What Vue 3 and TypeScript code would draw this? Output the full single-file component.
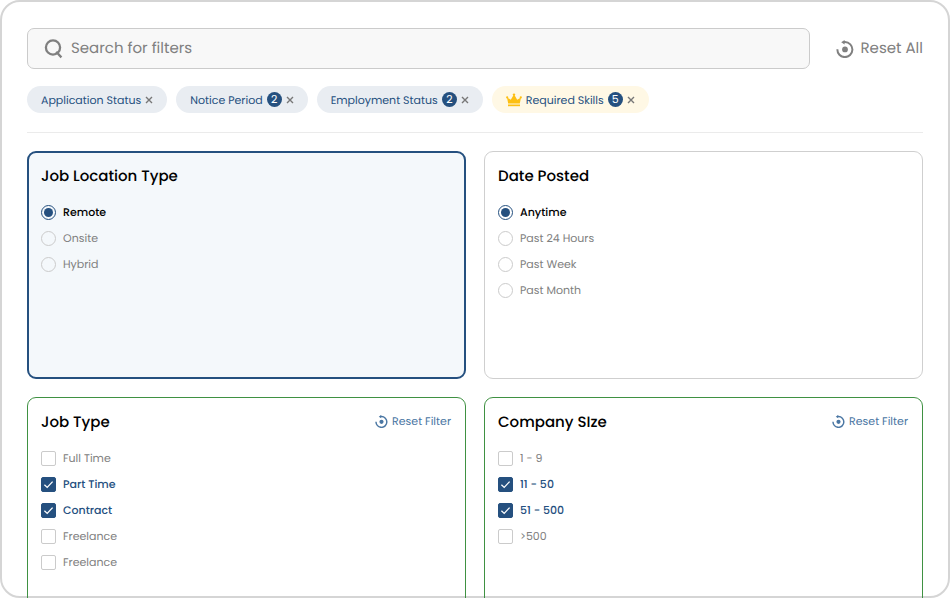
<script setup lang="ts">
import { ref, reactive } from 'vue'

interface Chip {
  label: string
  count?: number
  premium?: boolean
}

interface FilterGroup {
  id: string
  title: string
  kind: 'radio' | 'checkbox'
  tone: 'focused' | 'plain' | 'applied'
  options: string[]
  selected: number[]
}

const query = ref('')

const chips = ref<Chip[]>([
  { label: 'Application Status' },
  { label: 'Notice Period', count: 2 },
  { label: 'Employment Status', count: 2 },
  { label: 'Required Skills', count: 5, premium: true },
])

const groups = reactive<FilterGroup[]>([
  { id: 'location', title: 'Job Location Type', kind: 'radio', tone: 'focused', options: ['Remote', 'Onsite', 'Hybrid'], selected: [0] },
  { id: 'date', title: 'Date Posted', kind: 'radio', tone: 'plain', options: ['Anytime', 'Past 24 Hours', 'Past Week', 'Past Month'], selected: [0] },
  { id: 'type', title: 'Job Type', kind: 'checkbox', tone: 'applied', options: ['Full Time', 'Part Time', 'Contract', 'Freelance', 'Freelance'], selected: [1, 2] },
  { id: 'size', title: 'Company SIze', kind: 'checkbox', tone: 'applied', options: ['1 - 9', '11 - 50', '51 - 500', '>500'], selected: [1, 2] },
])

function toggle(group: FilterGroup, index: number) {
  if (group.kind === 'radio') {
    group.selected = [index]
  } else if (group.selected.includes(index)) {
    group.selected = group.selected.filter((i) => i !== index)
  } else {
    group.selected = [...group.selected, index]
  }
}

function resetGroup(group: FilterGroup) {
  group.selected = group.kind === 'radio' ? [0] : []
}

function resetAll() {
  query.value = ''
  chips.value = []
  groups.forEach(resetGroup)
}
</script>

<template>
  <main class="panel">
    <header class="toolbar">
      <label class="search">
        <svg class="search-icon" viewBox="0 0 20 20" aria-hidden="true">
          <circle cx="9" cy="8.5" r="7.1" />
          <path d="M12.2 12.8 17.4 18.4" />
        </svg>
        <input v-model="query" type="text" placeholder="Search for filters" aria-label="Search for filters" />
      </label>
      <button class="reset reset-all" type="button" @click="resetAll">
        <svg viewBox="0 0 18 18" aria-hidden="true">
          <path class="arc" d="M1.4 9.3a7.5 7.5 0 1 0 7.6-7.2H7" />
          <path class="dot" d="M8.6 0v4.6L5.2 2.3z" />
          <circle class="dot" cx="9" cy="9.4" r="2.9" />
        </svg>
        Reset All
      </button>
    </header>

    <ul class="chips">
      <li v-for="(chip, i) in chips" :key="chip.label" class="chip" :class="{ premium: chip.premium }">
        <svg v-if="chip.premium" class="crown" viewBox="0 0 16 14" aria-hidden="true">
          <path d="M2.2 10.4 1 4.4 4.8 6.8 8 1.2l3.2 5.6L15 4.4l-1.2 6z" />
          <circle cx="8" cy="1.6" r="1.2" />
          <circle cx="1.2" cy="4.4" r="1.1" />
          <circle cx="14.8" cy="4.4" r="1.1" />
          <path d="M2 11.5h12v1.7H2z" />
        </svg>
        <span>{{ chip.label }}</span>
        <span v-if="chip.count" class="count">{{ chip.count }}</span>
        <button class="remove" type="button" :aria-label="'Remove ' + chip.label" @click="chips.splice(i, 1)">
          <svg viewBox="0 0 8 8" aria-hidden="true"><path d="M1 1l6 6M7 1 1 7" /></svg>
        </button>
      </li>
    </ul>

    <section class="grid">
      <fieldset v-for="group in groups" :key="group.id" class="card" :class="group.tone" :aria-labelledby="group.id + '-title'">
        <div class="card-head">
          <h2 :id="group.id + '-title'">{{ group.title }}</h2>
          <button v-if="group.tone === 'applied'" class="reset" type="button" @click="resetGroup(group)">
            <svg viewBox="0 0 18 18" aria-hidden="true">
              <path class="arc" d="M1.4 9.3a7.5 7.5 0 1 0 7.6-7.2H7" />
              <path class="dot" d="M8.6 0v4.6L5.2 2.3z" />
              <circle class="dot" cx="9" cy="9.4" r="2.9" />
            </svg>
            Reset Filter
          </button>
        </div>
        <label v-for="(option, i) in group.options" :key="i" class="option" :class="[group.kind, { on: group.selected.includes(i) }]">
          <span class="control">
            <input :type="group.kind" :name="group.id" :checked="group.selected.includes(i)" @change="toggle(group, i)" />
            <svg v-if="group.kind === 'checkbox' && group.selected.includes(i)" viewBox="0 0 15 15" aria-hidden="true">
              <path d="M3.4 7.8 6.2 10.4 11.6 4.6" />
            </svg>
          </span>
          {{ option }}
        </label>
      </fieldset>
    </section>
  </main>
</template>

<style>
html,
body {
  background: #fff;
  overflow: hidden;
}
</style>

<style scoped>
.panel {
  box-sizing: border-box;
  height: 100vh;
  padding: 26px 25px;
  border: 2px solid #d5d5d5;
  border-radius: 20px;
  background: #fff;
  color: #000;
  font-family: Poppins, Inter, sans-serif;
  font-size: 11px;
  line-height: 16px;
  text-rendering: geometricPrecision;
}

button,
input {
  margin: 0;
  padding: 0;
  border: 0;
  background: none;
  color: inherit;
  font: inherit;
  text-rendering: inherit;
}

button {
  cursor: pointer;
}

.toolbar {
  display: flex;
  align-items: center;
  gap: 26px;
  font-size: 15px;
  color: #808080;
}

.search {
  box-sizing: border-box;
  flex: 1;
  display: flex;
  align-items: center;
  gap: 7px;
  height: 41px;
  padding: 0 16px;
  border: 1px solid #cbcbcb;
  border-radius: 7px;
  background: #f8f8f8;
}

.search input {
  flex: 1;
  min-width: 0;
  outline: 0;
  line-height: 20px;
}

.search input::placeholder {
  color: #808080;
  opacity: 1;
}

.search-icon {
  width: 20px;
  height: 20px;
  fill: none;
  stroke: #808080;
  stroke-width: 2.3;
}

.reset {
  display: flex;
  align-items: center;
  gap: 4px;
  color: #4a76a3;
  line-height: 20px;
  white-space: nowrap;
}

.reset svg {
  width: 13px;
  height: 13px;
}

.reset-all {
  gap: 6px;
  color: #808080;
}

.reset-all svg {
  width: 18px;
  height: 18px;
}

.arc {
  fill: none;
  stroke: currentColor;
  stroke-width: 2;
}

.dot {
  fill: currentColor;
}

.chips {
  display: flex;
  gap: 9px;
  margin: 17px 0 18px;
  padding: 0 0 19px;
  border-bottom: 1px solid #ebebeb;
  list-style: none;
}

.chip {
  display: flex;
  align-items: center;
  gap: 4px;
  height: 27px;
  padding: 0 14px;
  border-radius: 14px;
  background: #e9edf2;
  color: #25507f;
  white-space: nowrap;
}

.premium {
  background: #fff8e5;
}

.crown {
  width: 16px;
  height: 14px;
  fill: #fdbf12;
}

.count {
  width: 15px;
  height: 15px;
  border-radius: 50%;
  background: #25507f;
  color: #fff;
  line-height: 15px;
  text-align: center;
}

.remove {
  display: flex;
}

.remove svg {
  width: 8px;
  height: 8px;
  fill: none;
  stroke: #777;
  stroke-width: 1.4;
}

.grid {
  display: grid;
  grid-template-columns: 1fr 1fr;
  grid-auto-rows: minmax(228px, auto);
  gap: 18px;
}

.card {
  min-width: 0;
  margin: 0;
  padding: 13px 14px 13px 13px;
  border: 1px solid #cfcfcf;
  border-radius: 9px;
}

.focused {
  padding: 12px;
  border: 2px solid #25507f;
  background: #f4f8fb;
}

.applied {
  border-color: #3f9142;
}

.card-head {
  display: flex;
  justify-content: space-between;
  align-items: flex-start;
  margin-bottom: 10px;
}

h2 {
  margin: 0;
  font-size: 15px;
  font-weight: 500;
  line-height: 24px;
}

.option {
  display: flex;
  align-items: center;
  gap: 7px;
  height: 26px;
  color: #808080;
}

.radio.on {
  color: #000;
  font-weight: 500;
}

.checkbox.on {
  color: #25507f;
  font-weight: 500;
}

.control {
  display: grid;
  width: 15px;
  height: 15px;
}

.control > * {
  grid-area: 1 / 1;
}

.control input {
  box-sizing: border-box;
  appearance: none;
  width: 15px;
  height: 15px;
  border: 1px solid #cbcbcb;
  border-radius: 2px;
}

.control input[type='radio'] {
  padding: 2px;
  border-radius: 50%;
}

.control input:checked {
  border-color: #25507f;
  background: #25507f;
}

.control input[type='radio']:checked {
  background: #25507f content-box;
}

.control svg {
  width: 15px;
  height: 15px;
  fill: none;
  stroke: #fff;
  stroke-width: 1.3;
  pointer-events: none;
}
</style>
